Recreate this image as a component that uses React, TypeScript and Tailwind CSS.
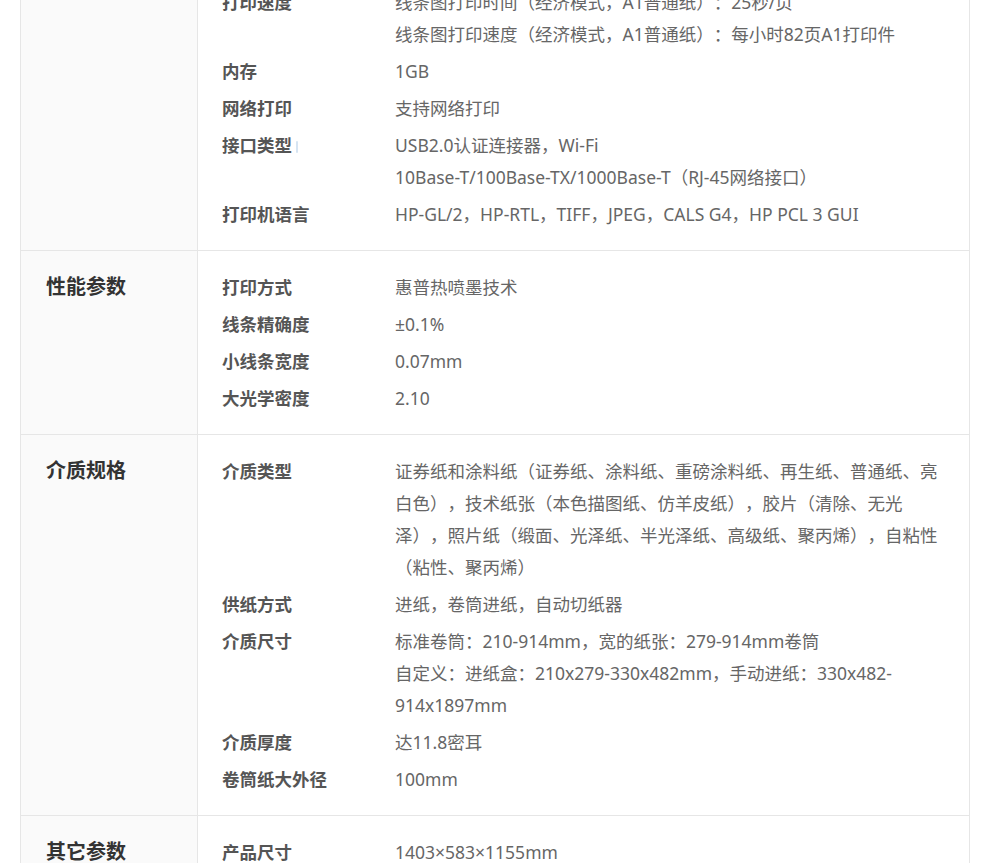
type Spec = { label: string; lines: string[]; mark?: boolean };
type Section = { title: string; items: Spec[] };

const sections: Section[] = [
  {
    title: "",
    items: [
      {
        label: "打印速度",
        lines: [
          "线条图打印时间（经济模式，A1普通纸）：25秒/页",
          "线条图打印速度（经济模式，A1普通纸）：每小时82页A1打印件",
        ],
      },
      { label: "内存", lines: ["1GB"] },
      { label: "网络打印", lines: ["支持网络打印"] },
      {
        label: "接口类型",
        mark: true,
        lines: ["USB2.0认证连接器，Wi-Fi", "10Base-T/100Base-TX/1000Base-T（RJ-45网络接口）"],
      },
      { label: "打印机语言", lines: ["HP-GL/2，HP-RTL，TIFF，JPEG，CALS G4，HP PCL 3 GUI"] },
    ],
  },
  {
    title: "性能参数",
    items: [
      { label: "打印方式", lines: ["惠普热喷墨技术"] },
      { label: "线条精确度", lines: ["±0.1%"] },
      { label: "小线条宽度", lines: ["0.07mm"] },
      { label: "大光学密度", lines: ["2.10"] },
    ],
  },
  {
    title: "介质规格",
    items: [
      {
        label: "介质类型",
        lines: [
          "证券纸和涂料纸（证券纸、涂料纸、重磅涂料纸、再生纸、普通纸、亮",
          "白色），技术纸张（本色描图纸、仿羊皮纸），胶片（清除、无光",
          "泽），照片纸（缎面、光泽纸、半光泽纸、高级纸、聚丙烯），自粘性",
          "（粘性、聚丙烯）",
        ],
      },
      { label: "供纸方式", lines: ["进纸，卷筒进纸，自动切纸器"] },
      {
        label: "介质尺寸",
        lines: [
          "标准卷筒：210-914mm，宽的纸张：279-914mm卷筒",
          "自定义：进纸盒：210x279-330x482mm，手动进纸：330x482-",
          "914x1897mm",
        ],
      },
      { label: "介质厚度", lines: ["达11.8密耳"] },
      { label: "卷筒纸大外径", lines: ["100mm"] },
    ],
  },
  {
    title: "其它参数",
    items: [{ label: "产品尺寸", lines: ["1403×583×1155mm"] }],
  },
];

function SpecRow({ spec }: { spec: Spec }) {
  return (
    <div className="flex">
      <div className="w-[173px] shrink-0 font-bold text-[#555]">
        {spec.label}
        {spec.mark && (
          <span className="ml-[4px] inline-block h-[12px] w-[2px] rounded-full bg-[#d6e4f2] align-middle" />
        )}
      </div>
      <div className="flex-1 text-[#666] whitespace-nowrap">
        {spec.lines.map((line) => (
          <div key={line}>{line}</div>
        ))}
      </div>
    </div>
  );
}

export default function App() {
  return (
    <div className="min-h-screen bg-white font-['Noto_Sans','Noto_Sans_CJK_SC',sans-serif] text-[17.5px] leading-8 [text-spacing-trim:space-all]">
      <div className="ml-[20px] -mt-[14px] w-[950px] border-x border-[#e6e6e6]">
        {sections.map((section, i) => (
          <div
            key={section.title || "top"}
            className="grid grid-cols-[177px_1fr] border-b border-[#e6e6e6]"
          >
            <div className={`border-r border-[#e6e6e6] bg-[#fafafa] px-[25px] ${i === 0 ? "" : "pt-5"}`}>
              <span className="text-[20px] font-bold text-[#333]">{section.title}</span>
            </div>
            <div className={`flex flex-col gap-[5px] pl-6 pr-6 pb-5 ${i === 0 ? "" : "pt-5"}`}>
              {section.items.map((spec) => (
                <SpecRow key={spec.label} spec={spec} />
              ))}
            </div>
          </div>
        ))}
      </div>
    </div>
  );
}
